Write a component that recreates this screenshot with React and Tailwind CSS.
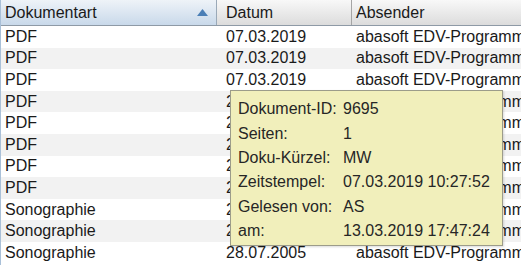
const ROWS = [
  ["PDF", "07.03.2019"],
  ["PDF", "07.03.2019"],
  ["PDF", "07.03.2019"],
  ["PDF", "27.02.2019"],
  ["PDF", "27.02.2019"],
  ["PDF", "27.02.2019"],
  ["PDF", "27.02.2019"],
  ["PDF", "27.02.2019"],
  ["Sonographie", "28.07.2005"],
  ["Sonographie", "28.07.2005"],
  ["Sonographie", "28.07.2005"],
];

const TIP = [
  ["Dokument-ID:", "9695"],
  ["Seiten:", "1"],
  ["Doku-Kürzel:", "MW"],
  ["Zeitstempel:", "07.03.2019 10:27:52"],
  ["Gelesen von:", "AS"],
  ["am:", "13.03.2019 17:47:24"],
];

export default function App() {
  return (
    <div
      className="relative w-[521px] h-[265px] overflow-hidden bg-white text-[16px] text-[#1a1a1a] border-l border-[#a9c0d8]"
      style={{ fontFamily: '"Liberation Sans", Arial, sans-serif' }}
    >
      {/* Header */}
      <div className="flex h-[26px] border-b border-[#8e9aa6]">
        <div className="w-[216px] flex items-center justify-between pl-[4px] pr-[8px] bg-gradient-to-b from-[#eef3f8] to-[#c9d9ea] border-r border-[#9aa9b8]">
          <span>Dokumentart</span>
          <svg width="11" height="7" viewBox="0 0 11 7">
            <path d="M5.5 0 L11 7 L0 7 Z" fill="#4b7fb6" />
          </svg>
        </div>
        <div className="w-[135px] flex items-center pl-[9px] bg-gradient-to-b from-[#f8f8f8] to-[#dcdcdc] border-r border-[#a5a5a5]">
          Datum
        </div>
        <div className="flex-1 flex items-center pl-[4px] bg-gradient-to-b from-[#f8f8f8] to-[#dcdcdc]">
          Absender
        </div>
      </div>

      {/* Rows */}
      {ROWS.map((r, i) => (
        <div
          key={i}
          className={`flex h-[21.6px] items-center whitespace-nowrap ${
            i % 2 === 1 ? "bg-[#f2f2f2]" : "bg-white"
          }`}
        >
          <div className="w-[217px] pl-[4px]">{r[0]}</div>
          <div className="w-[138px] pl-[8px]">{r[1]}</div>
          <div className="flex-1 overflow-hidden">abasoft EDV-Programme</div>
        </div>
      ))}

      {/* Tooltip */}
      <div className="absolute left-[229px] top-[90px] w-[273px] h-[156px] bg-[#f1efbb] border border-[#9c9c8a] shadow-[1px_1px_2px_rgba(0,0,0,0.15)] pl-[7px] pt-[6px] text-[#262626]">
        {TIP.map(([k, v]) => (
          <div key={k} className="flex h-[24.4px] items-center whitespace-nowrap">
            <div className="w-[105px]">{k}</div>
            <div>{v}</div>
          </div>
        ))}
      </div>
    </div>
  );
}
